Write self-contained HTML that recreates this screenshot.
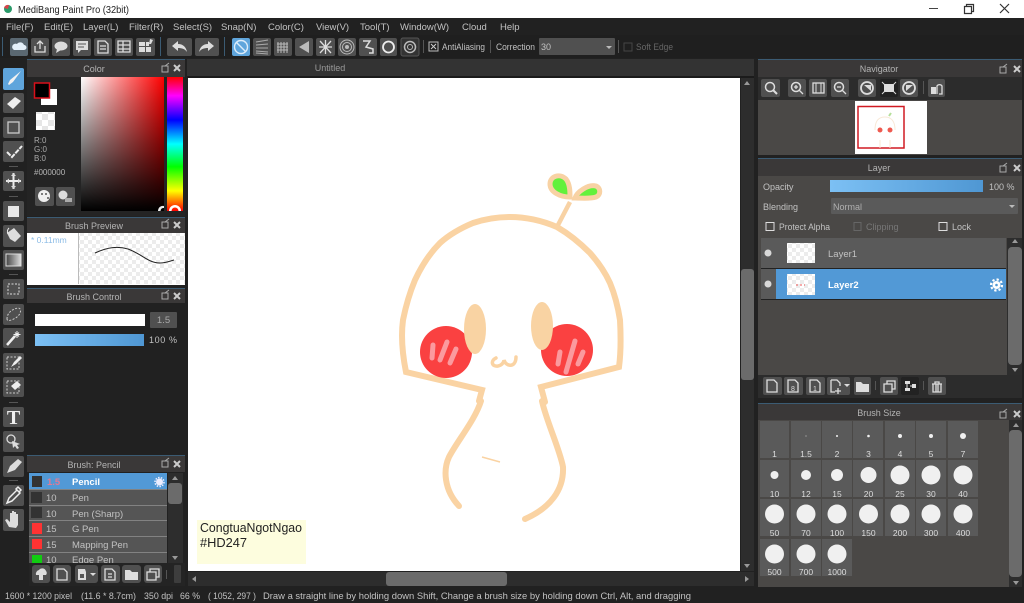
<!DOCTYPE html>
<html><head><meta charset="utf-8"><title>MediBang Paint Pro</title>
<style>
html,body{margin:0;padding:0;background:#222;width:1024px;height:603px;overflow:hidden}
svg{display:block}
text{font-family:"Liberation Sans",sans-serif;fill:#c2c2c2;font-size:9.5px}
.h{fill:#b4b4b4;font-size:9px;text-anchor:middle}
.b{fill:#505050}
.i{fill:none;stroke:#ddd;stroke-width:1.3}
.f{fill:#ddd}
.l{font-size:8.5px;fill:#ddd;text-anchor:middle}
.c{fill:#5a5a5a}
.d{fill:#f0f0f0}
.s{fill:none;stroke:#fad3a3;stroke-width:6;stroke-linecap:round;stroke-linejoin:miter}
.w{fill:none;stroke:#fb9a9e;stroke-width:5;stroke-linecap:round}
.x{stroke:#ccc;stroke-width:2;fill:none}
</style></head><body>
<svg width="1024" height="603" viewBox="0 0 1024 603" xmlns="http://www.w3.org/2000/svg">
<defs>
<pattern id="ck" width="12" height="12" patternUnits="userSpaceOnUse"><rect width="12" height="12" fill="#fff"/><rect width="6" height="6" fill="#e6e6e6"/><rect x="6" y="6" width="6" height="6" fill="#e6e6e6"/></pattern>
<pattern id="ck2" width="8" height="8" patternUnits="userSpaceOnUse"><rect width="8" height="8" fill="#fff"/><rect width="4" height="4" fill="#ececec"/><rect x="4" y="4" width="4" height="4" fill="#ececec"/></pattern>
<linearGradient id="gx"><stop offset="0" stop-color="#fff"/><stop offset="1" stop-color="#f00"/></linearGradient>
<linearGradient id="gy" x2="0" y2="1"><stop offset="0" stop-color="#000" stop-opacity="0"/><stop offset="1" stop-color="#000"/></linearGradient>
<linearGradient id="hue" x2="0" y2="1"><stop offset="0" stop-color="#f00"/><stop offset=".14" stop-color="#f0f"/><stop offset=".32" stop-color="#00f"/><stop offset=".5" stop-color="#0ff"/><stop offset=".67" stop-color="#0f0"/><stop offset=".85" stop-color="#ff0"/><stop offset="1" stop-color="#f00"/></linearGradient>
<linearGradient id="bl"><stop offset="0" stop-color="#7cc0f4"/><stop offset="1" stop-color="#4f97d3"/></linearGradient>
<linearGradient id="gr"><stop offset="0" stop-color="#444"/><stop offset="1" stop-color="#ddd"/></linearGradient>
</defs>

<!-- base -->
<rect width="1024" height="603" fill="#212121"/>
<rect width="1024" height="18" fill="#fff"/>
<circle cx="8" cy="9" r="4" fill="#2a9a6a"/><path d="M4 8a4 4 0 0 1 5-3l-1 4z" fill="#d8434a"/>
<text x="18" y="13" style="fill:#222;font-size:10px" textLength="111" lengthAdjust="spacingAndGlyphs">MediBang Paint Pro (32bit)</text>
<path d="M929 8.500h9" stroke="#444" stroke-width="1"/>
<path d="M964.500 6.500h7v7h-7zM966.500 6.500v-2h7v7h-2" fill="none" stroke="#333" stroke-width="1.200"/>
<path d="M1000 4l9 9M1009 4l-9 9" stroke="#333" stroke-width="1.200"/>

<!-- menu -->
<text x="6" y="30">File(F)</text><text x="44" y="30">Edit(E)</text><text x="83" y="30">Layer(L)</text><text x="129" y="30">Filter(R)</text><text x="173" y="30">Select(S)</text><text x="221" y="30">Snap(N)</text><text x="268" y="30">Color(C)</text><text x="316" y="30">View(V)</text><text x="360" y="30">Tool(T)</text><text x="400" y="30">Window(W)</text><text x="462" y="30">Cloud</text><text x="500" y="30">Help</text>

<!-- toolbar -->
<rect y="35" width="1024" height="23" fill="#1f1f1f"/>
<rect x="2" y="37" width="1" height="19" fill="#3b5b73"/><rect x="160" y="37" width="1" height="19" fill="#3b5b73"/><rect x="224" y="37" width="1" height="19" fill="#3b5b73"/>
<rect x="10" y="38" width="18" height="18" rx="2" fill="#5a6872"/><path d="M14 50h10a2.500 2.500 0 0 0 0-5 4 4 0 0 0-7-1 3 3 0 0 0-3 6z" fill="#e4f0fa"/>
<rect class="b" x="31" y="38" width="18" height="18" rx="2"/><path class="i" d="M35 46v6h10v-6M40 49v-8M37 44l3-3 3 3"/>
<rect class="b" x="52" y="38" width="18" height="18" rx="2"/><ellipse class="f" cx="61" cy="46" rx="6.500" ry="4.500"/><path class="f" d="M57 49l-1 4 5-3z"/>
<rect class="b" x="73" y="38" width="18" height="18" rx="2"/><path class="f" d="M76 41h12v9h-7l-3 3v-3h-2z"/><path d="M78 44h8M78 47h6" stroke="#555"/>
<rect class="b" x="94" y="38" width="18" height="18" rx="2"/><path class="i" d="M98 41h7l3 3v9H98zM100 46h6M100 49h6"/>
<rect class="b" x="115" y="38" width="18" height="18" rx="2"/><path class="i" d="M118 41h12v11h-12zM118 45h12M118 49h12M123 41v11"/>
<rect class="b" x="136" y="38" width="19" height="18" rx="2"/><path class="f" d="M139 42h6v4h-6zM146 42h3v4h-3zM139 47h6v5h-6zM146 47h5v5h-5zM150 39l3 1-2 4h-2z"/>
<rect class="b" x="167" y="38" width="25" height="18" rx="2"/><path class="f" d="M172 46l6-5v3c5 0 8 3 9 8-2-3-5-4-9-4v3z"/>
<rect class="b" x="195" y="38" width="24" height="18" rx="2"/><path class="f" d="M214 46l-6-5v3c-5 0-8 3-9 8 2-3 5-4 9-4v3z"/>
<rect x="232" y="38" width="18" height="18" rx="2" fill="#5fa5dc"/><circle cx="241" cy="47" r="6.500" fill="none" stroke="#dcecfa" stroke-width="1.400"/><path d="M236.500 42.500l9 9" stroke="#dcecfa" stroke-width="1.400"/>
<rect class="b" x="253" y="38" width="18" height="18" rx="2"/><path d="M256 42l12-2M256 45l12-1M256 48l12 0M256 51l12 1M256 53l12 1" stroke="#aaa"/>
<rect class="b" x="274" y="38" width="18" height="18" rx="2"/><path d="M278 42v11M281 42v11M284 42v11M287 42v11M277 44h11M277 47h11M277 50h11" stroke="#bbb"/>
<rect class="b" x="295" y="38" width="18" height="18" rx="2"/><path d="M299 47l10-6v12z" fill="#bbb"/>
<rect class="b" x="316" y="38" width="19" height="18" rx="2"/><path d="M325.500 40v14M319 47h13M320 41l11 12M331 41l-11 12" stroke="#ddd" stroke-width="1.300"/>
<rect class="b" x="338" y="38" width="18" height="18" rx="2"/><circle cx="347" cy="47" r="2" fill="#bbb"/><circle cx="347" cy="47" r="4.500" fill="none" stroke="#bbb"/><circle cx="347" cy="47" r="7" fill="none" stroke="#bbb"/>
<rect class="b" x="359" y="38" width="18" height="18" rx="2"/><path d="M363 41h7l-4 6 7 2v4h-4" fill="none" stroke="#ddd" stroke-width="1.500"/>
<rect class="b" x="380" y="38" width="17" height="18" rx="2"/><circle cx="388.500" cy="47" r="5.500" fill="none" stroke="#eee" stroke-width="1.800"/>
<rect x="401" y="38" width="18" height="18" rx="2" fill="#333" stroke="#555"/><circle cx="410" cy="47" r="5.500" fill="none" stroke="#bbb" stroke-width="1.500"/><circle cx="410" cy="47" r="2.500" fill="none" stroke="#bbb"/>
<rect x="423" y="40" width="1" height="13" fill="#555"/>
<rect x="429" y="42" width="9" height="9" fill="none" stroke="#bbb"/><path d="M431 44l5 5M436 44l-5 5" stroke="#ccc"/>
<text x="442" y="50" style="font-size:9px" textLength="43" lengthAdjust="spacingAndGlyphs">AntiAliasing</text>
<rect x="490" y="40" width="1" height="13" fill="#555"/>
<text x="496" y="50" style="font-size:9px" textLength="39" lengthAdjust="spacingAndGlyphs">Correction</text>
<rect class="b" x="539" y="38" width="76" height="17" rx="1"/><text x="541" y="50" style="font-size:9px">30</text><path d="M606 46h6l-3 3z" fill="#bbb"/>
<rect x="618" y="40" width="1" height="13" fill="#555"/>
<rect x="624" y="43" width="8" height="8" fill="none" stroke="#444"/>
<text x="636" y="50" style="font-size:9px;fill:#666" textLength="37" lengthAdjust="spacingAndGlyphs">Soft Edge</text>

<!-- left tools -->
<rect x="3" y="68" width="21" height="22" rx="2" fill="#5fa5dc"/><path d="M8 84l2-4 11-9-8 11-4 3z" fill="#f2f2f2"/>
<rect class="b" x="3" y="93" width="21" height="20" rx="2"/><path d="M7 104l8-7 6 4-8 8z" fill="#eee"/>
<rect class="b" x="3" y="117" width="21" height="21" rx="2"/><rect x="8" y="122" width="11" height="11" fill="none" stroke="#ccc" stroke-width="1.300"/>
<rect class="b" x="3" y="141" width="21" height="21" rx="2"/><path d="M7 152l5 5 10-11" fill="none" stroke="#eee" stroke-width="2" stroke-dasharray="5 1"/>
<rect x="9" y="166" width="9" height="1" fill="#555"/>
<rect class="b" x="3" y="171" width="21" height="20" rx="2"/><path d="M13.500 173v16M6 181h15" stroke="#eee" stroke-width="2"/><path class="f" d="M11 176l2.500-3 2.500 3zM11 186l2.500 3 2.500-3zM9 178.500l-3 2.500 3 2.500zM18 178.500l3 2.500-3 2.500z"/>
<rect x="9" y="196" width="9" height="1" fill="#555"/>
<rect class="b" x="3" y="201" width="21" height="20" rx="2"/><rect x="8" y="206" width="11" height="11" fill="#e8e8e8"/>
<rect class="b" x="3" y="225" width="21" height="22" rx="2"/><path class="f" d="M7 233l7-5 7 8-6 6-5-3z"/><path d="M9 228c-2 2-2 4-1 6" stroke="#eee" fill="none"/>
<rect class="b" x="3" y="250" width="21" height="20" rx="2"/><rect x="6" y="254" width="15" height="12" fill="url(#gr)" stroke="#ddd"/>
<rect x="9" y="274" width="9" height="1" fill="#555"/>
<rect class="b" x="3" y="279" width="21" height="20" rx="2"/><rect x="8" y="284" width="11" height="10" fill="none" stroke="#ddd" stroke-dasharray="2 1.500"/>
<rect class="b" x="3" y="304" width="21" height="21" rx="2"/><path d="M7 319c0-6 5-10 11-11 4 0 3 6-1 9s-10 5-10 2z" fill="none" stroke="#ccc" stroke-dasharray="2 1.500"/>
<rect class="b" x="3" y="328" width="21" height="20" rx="2"/><path d="M7 345l8-9" stroke="#eee" stroke-width="2.500"/><path d="M17 331v7M13.500 334.500h7M15 332.500l4 4M19 332.500l-4 4" stroke="#eee"/>
<rect class="b" x="3" y="353" width="21" height="20" rx="2"/><rect x="7" y="357" width="12" height="12" fill="none" stroke="#ccc" stroke-dasharray="2 1.500"/><path d="M11 367l3-5 6-6 2 2-6 6z" fill="#eee"/>
<rect class="b" x="3" y="377" width="21" height="20" rx="2"/><rect x="7" y="381" width="12" height="12" fill="none" stroke="#ccc" stroke-dasharray="2 1.500"/><path d="M11 386l6-5 4 4-6 5z" fill="#eee"/>
<rect x="9" y="402" width="9" height="1" fill="#555"/>
<rect class="b" x="3" y="407" width="21" height="20" rx="2"/><text x="13.500" y="424" text-anchor="middle" style="font-family:'Liberation Serif',serif;font-weight:bold;font-size:20px;fill:#eee">T</text>
<rect class="b" x="3" y="431" width="21" height="21" rx="2"/><circle cx="11" cy="439" r="4" fill="none" stroke="#ddd" stroke-width="1.300"/><path class="f" d="M12 441l8 3-3 1 2 3-2 1-2-3-2 2z"/>
<rect class="b" x="3" y="456" width="21" height="21" rx="2"/><path class="f" d="M7 473l3-7 8-7 4 3-7 8z"/>
<rect x="9" y="480" width="9" height="1" fill="#555"/>
<rect class="b" x="3" y="485" width="21" height="21" rx="2"/><path d="M7 503l2-5 8-8 3 3-8 8zM16 489l2-2 3 3-2 2z" fill="none" stroke="#eee" stroke-width="1.500"/>
<rect class="b" x="3" y="509" width="21" height="22" rx="2"/><path class="f" d="M9 527l-4-7 2-1 3 3v-9h2v7-9h2v9-8h2v8-6h2v11l-2 3z"/>

<!-- color panel -->
<rect x="27" y="60" width="158" height="156" fill="#242424"/>
<rect x="27" y="60" width="158" height="17" fill="#3a3838"/><rect x="27" y="59" width="158" height="1" fill="#3b5b73"/>
<text class="h" x="94" y="72">Color</text>
<path d="M162 66h6v6h-6zM165 66l4-3" fill="none" stroke="#aaa"/><path class="x" d="M174 65l6 6M180 65l-6 6"/>
<rect x="41" y="89" width="16" height="16" fill="#fff"/>
<rect x="34.500" y="83" width="15" height="15" fill="#000" stroke="#d8101a" stroke-width="1.500"/>
<rect x="36" y="112" width="19" height="18" fill="url(#ck)"/>
<text x="34" y="143" style="font-size:8px;fill:#a8a8a8">R:0</text><text x="34" y="152" style="font-size:8px;fill:#a8a8a8">G:0</text><text x="34" y="161" style="font-size:8px;fill:#a8a8a8">B:0</text>
<text x="34" y="175" style="font-size:8px;fill:#b4b4b4">#000000</text>
<rect class="b" x="35" y="187" width="19" height="19" rx="2"/><circle cx="44" cy="196" r="6" fill="#eee"/><circle cx="42" cy="194" r="1" fill="#555"/><circle cx="46" cy="194" r="1" fill="#555"/><circle cx="48" cy="198" r="1" fill="#555"/>
<rect class="b" x="56" y="187" width="19" height="19" rx="2"/><circle cx="63" cy="195" r="4.500" fill="#ddd"/><rect x="65" y="198" width="7" height="4" fill="#aaa"/>
<rect x="81" y="77" width="83" height="134" fill="url(#gx)"/><rect x="81" y="77" width="83" height="134" fill="url(#gy)"/>
<rect x="167" y="77" width="16" height="134" fill="url(#hue)"/>
<path d="M158 211a5 5 0 0 1 6-5v2a3 3 0 0 0-3.500 3z" fill="#eee"/>
<path d="M169 211a6 6 0 0 1 12 0h-2.500a3.500 3.500 0 0 0-7 0z" fill="#fff"/>

<!-- brush preview -->
<rect x="27" y="217" width="158" height="1" fill="#3b5b73"/><rect x="27" y="218" width="158" height="15" fill="#3a3838"/>
<text class="h" x="94" y="229">Brush Preview</text>
<path d="M162 222h6v6h-6zM165 222l4-3" fill="none" stroke="#aaa"/><path class="x" d="M174 222l6 6M180 222l-6 6"/>
<rect x="27" y="233" width="158" height="52" fill="#fff"/><rect x="79" y="233" width="106" height="51" fill="url(#ck2)"/><rect x="78" y="233" width="1" height="51" fill="#bbb"/>
<text x="31" y="243" style="font-size:8.5px;fill:#8cbce6">* 0.11mm</text>
<path d="M95 253C108 247 118 246 128 249C142 254 148 263 160 263C166 263 170 261 174 260" fill="none" stroke="#222" stroke-width="1"/>

<!-- brush control -->
<rect x="27" y="288" width="158" height="1" fill="#3b5b73"/><rect x="27" y="289" width="158" height="14" fill="#3a3838"/>
<text class="h" x="94" y="300">Brush Control</text>
<path d="M162 293h6v6h-6zM165 293l4-3" fill="none" stroke="#aaa"/><path class="x" d="M174 293l6 6M180 293l-6 6"/>
<rect x="35" y="314" width="110" height="12" fill="#fff"/>
<rect x="150" y="312" width="27" height="16" rx="1" fill="#505050"/><text x="163.500" y="323" text-anchor="middle" style="fill:#aaa">1.5</text>
<rect x="35" y="334" width="109" height="12" fill="url(#bl)"/><text x="149" y="343" style="font-size:9px" textLength="28">100 %</text>

<!-- brush list -->
<rect x="27" y="455" width="158" height="1" fill="#3b5b73"/><rect x="27" y="456" width="158" height="16" fill="#3a3838"/>
<text class="h" x="94" y="468">Brush: Pencil</text>
<path d="M162 461h6v6h-6zM165 461l4-3" fill="none" stroke="#aaa"/><path class="x" d="M174 461l6 6M180 461l-6 6"/>
<rect x="29" y="473" width="138" height="90" fill="#555"/>
<rect x="29" y="473" width="138" height="16" fill="#5299d6"/>
<path d="M29 505.500h138M29 520.500h138M29 536.500h138M29 552.500h138M29 489.500h138" stroke="#828282"/>
<rect x="32" y="476" width="10" height="11" fill="#333"/><rect x="31" y="492" width="11" height="11" fill="#333"/><rect x="31" y="507" width="11" height="11" fill="#333"/><rect x="32" y="523" width="10" height="11" fill="#f33"/><rect x="32" y="539" width="10" height="10" fill="#f33"/><rect x="32" y="555" width="10" height="8" fill="#1c1"/>
<text x="47" y="485" style="font-weight:bold;fill:#e07a94">1.5</text><text x="72" y="485" style="font-weight:bold;fill:#fff">Pencil</text>
<circle cx="159.500" cy="482" r="3.500" fill="#eef"/><circle cx="159.500" cy="482" r="4.500" fill="none" stroke="#eef" stroke-dasharray="1.500 1.300" stroke-width="1.500"/>
<text x="46" y="501">10</text><text x="72" y="501">Pen</text>
<text x="46" y="517">10</text><text x="72" y="517">Pen (Sharp)</text>
<text x="46" y="532">15</text><text x="72" y="532">G Pen</text>
<text x="46" y="548">15</text><text x="72" y="548">Mapping Pen</text>
<text x="46" y="563">10</text><text x="72" y="563">Edge Pen</text>
<rect x="29" y="563" width="156" height="23" fill="#242424"/>
<rect x="168" y="473" width="15" height="90" fill="#2d2d2d"/><rect x="168" y="483" width="14" height="21" rx="3" fill="#6b6b6b"/><path d="M172 480l3-4 3 4zM172 556l3 4 3-4z" fill="#999"/>
<rect class="b" x="32" y="565" width="18" height="18" rx="3"/><path class="f" d="M36 575a4 4 0 0 1 3-5 4 4 0 0 1 7 1 3 3 0 0 1 0 4h-3v5h-4v-5z"/>
<rect class="b" x="53" y="565" width="18" height="18" rx="3"/><path class="i" d="M57 569h7l3 3v8H57z"/>
<rect class="b" x="75" y="565" width="23" height="18" rx="3"/><path class="f" d="M78 569h7l1 3v8h-8z"/><rect x="80" y="574" width="4" height="4" fill="#555"/><path d="M90 573h6l-3 3z" fill="#ddd"/>
<rect class="b" x="101" y="565" width="19" height="18" rx="3"/><path class="i" d="M105 569h7l3 3v8h-10zM108 574h4M108 577h4"/>
<rect class="b" x="122" y="565" width="19" height="18" rx="3"/><path class="f" d="M125 570h5l2 2h6v8h-13z"/>
<rect class="b" x="144" y="565" width="18" height="18" rx="3"/><path class="i" d="M147 572h9v8h-9zM150 572v-3h9v8h-3"/>
<rect x="166" y="570" width="1" height="9" fill="#555"/>
<rect x="174" y="565" width="7" height="18" rx="1" fill="#3d3d3d"/>

<!-- canvas -->
<rect x="187" y="59" width="567" height="17" fill="#333"/>
<rect x="187" y="76" width="567" height="2" fill="#1b1b1b"/>
<text class="h" x="330" y="71" style="fill:#999">Untitled</text>
<rect x="188" y="78" width="552" height="493" fill="#fff"/>

<!-- drawing -->
<path class="s" d="M479 401L482 390L406 372C402 352 401 335 403 320C406 305 410 292 415 280C422 265 430 253 440 243C450 234 461 228 473 223C485 219 497 217 510 217C527 217 543 221 557 227C569 234 580 243 590 253C598 262 605 272 610 283C615 295 618 307 620 320C621 338 621 352 619 367L541 387L545 402"/>
<path class="s" d="M481 401C475 420 458 440 449 457C443 470 444 490 459 506"/>
<path class="s" d="M542 401C546 420 560 450 563 467C564 490 550 508 525 519"/>
<path d="M482 457L500 462" stroke="#fad3a3" stroke-width="1.500"/>
<path d="M558 225L570 202" stroke="#f8d2a4" stroke-width="4.500"/>
<path d="M570 197C560 197 550 192 550 184C550 176 560 173 566 179C570 184 570 192 570 197Z" fill="#62f13c" stroke="#f8d2a4" stroke-width="5"/>
<path d="M575 198C577 192 588 184 596 186C601 188 601 195 596 197C590 199 582 198 575 198Z" fill="#62f13c" stroke="#f8d2a4" stroke-width="5"/>
<circle cx="446" cy="352" r="26" fill="#fa4141"/><circle cx="567" cy="350" r="26" fill="#fa4141"/>
<path class="w" d="M432 358L433 345M440 360L447 342M450 363L456 349"/>
<path class="w" d="M558 364L560 352M566 372L575 341M578 364L583 352"/>
<ellipse cx="475" cy="329" rx="11" ry="25" fill="#f9d3a3"/><ellipse cx="542" cy="326" rx="11" ry="24" fill="#f9d3a3"/>
<path d="M496 358C490 361 492 367 498 366C503 365 504 361 504 360C506 367 516 368 516 357" fill="none" stroke="#fad3a3" stroke-width="3.500" stroke-linecap="round"/>

<!-- watermark -->
<rect x="197" y="520" width="109" height="44" fill="#fdfdde"/>
<text x="200" y="532" style="fill:#222;font-size:13px" textLength="102" lengthAdjust="spacingAndGlyphs">CongtuaNgotNgao</text>
<text x="200" y="547" style="fill:#222;font-size:13px" textLength="47" lengthAdjust="spacingAndGlyphs">#HD247</text>

<!-- scrollbars -->
<rect x="741" y="78" width="13" height="493" fill="#2d2d2d"/><rect x="741" y="269" width="13" height="111" rx="3" fill="#6b6b6b"/><path d="M744 85l3-4 3 4zM744 564l3 4 3-4z" fill="#999"/>
<rect x="188" y="572" width="566" height="14" fill="#2d2d2d"/><rect x="386" y="572" width="121" height="14" rx="3" fill="#6b6b6b"/><path d="M196 576l-4 3 4 3zM745 576l4 3-4 3z" fill="#999"/>

<!-- status -->
<text x="5" y="599" textLength="67" lengthAdjust="spacingAndGlyphs">1600 * 1200 pixel</text><text x="81" y="599" textLength="55" lengthAdjust="spacingAndGlyphs">(11.6 * 8.7cm)</text><text x="144" y="599" textLength="29" lengthAdjust="spacingAndGlyphs">350 dpi</text><text x="180" y="599" textLength="20" lengthAdjust="spacingAndGlyphs">66 %</text><text x="208" y="599" textLength="48" lengthAdjust="spacingAndGlyphs">( 1052, 297 )</text><text x="263" y="599" textLength="428" lengthAdjust="spacingAndGlyphs">Draw a straight line by holding down Shift, Change a brush size by holding down Ctrl, Alt, and dragging</text>

<!-- navigator -->
<rect x="758" y="60" width="264" height="95" fill="#3a3838"/><rect x="758" y="59" width="264" height="1" fill="#3b5b73"/>
<text class="h" x="879" y="72">Navigator</text>
<path d="M1000 67h6v6h-6zM1003 67l4-3" fill="none" stroke="#aaa"/><path class="x" d="M1014 66l6 6M1020 66l-6 6"/>
<rect x="758" y="77" width="264" height="23" fill="#2c2c2c"/>
<rect class="b" x="761" y="79" width="19" height="18" rx="2"/><circle cx="770" cy="87" r="4.500" fill="none" stroke="#ddd" stroke-width="1.500"/><path d="M773 90l4 4" stroke="#ddd" stroke-width="2"/>
<rect class="b" x="788" y="79" width="18" height="18" rx="2"/><circle cx="796" cy="87" r="4.500" fill="none" stroke="#ddd" stroke-width="1.500"/><path d="M799 90l4 4M794 87h4M796 85v4" stroke="#ddd" stroke-width="1.300"/>
<rect class="b" x="809" y="79" width="18" height="18" rx="2"/><rect x="813" y="83" width="11" height="10" fill="none" stroke="#ddd" stroke-width="1.300"/><path d="M816 83v10M821 83v10" stroke="#ddd"/>
<rect class="b" x="831" y="79" width="18" height="18" rx="2"/><circle cx="839" cy="87" r="4.500" fill="none" stroke="#ddd" stroke-width="1.500"/><path d="M842 90l4 4M837 87h4" stroke="#ddd" stroke-width="1.300"/>
<rect class="b" x="858" y="79" width="18" height="18" rx="2"/><circle cx="867" cy="88" r="6" fill="none" stroke="#ddd" stroke-width="1.800"/><path class="f" d="M864 85l7 0 0 6z"/>
<rect x="880" y="79" width="18" height="18" rx="2" fill="#222"/><path class="f" d="M884 84h10v8h-10z"/><path d="M882 82l3 3M896 82l-3 3M882 94l3-3M896 94l-3-3" stroke="#ddd"/>
<rect class="b" x="900" y="79" width="18" height="18" rx="2"/><circle cx="909" cy="88" r="6" fill="none" stroke="#ddd" stroke-width="1.800"/><path class="f" d="M906 85l7 0-7 6z"/>
<rect x="923" y="81" width="1" height="13" fill="#555"/>
<rect class="b" x="928" y="79" width="17" height="18" rx="2"/><rect x="931" y="87" width="5" height="7" fill="#ddd"/><path d="M937 94v-8a3 3 0 0 1 5 0v8h-3" fill="none" stroke="#ddd" stroke-width="1.300"/>
<rect x="758" y="100" width="264" height="55" fill="#4a4846"/>
<rect x="855" y="101" width="72" height="53" fill="#fff"/>
<rect x="858" y="106.500" width="46" height="41.500" fill="none" stroke="#d01a22" stroke-width="1.500"/>
<circle cx="880" cy="130" r="2.500" fill="#ee5a50"/><circle cx="890" cy="130" r="2.500" fill="#ee5a50"/>
<path d="M875 130c0-10 4-13 10-13s10 4 10 13M880 140v8M890 140v8" fill="none" stroke="#f8e8d6"/><path d="M889 116l2-3" stroke="#b5df9a" stroke-width="2"/>

<!-- layer -->
<rect x="758" y="158" width="264" height="1" fill="#3b5b73"/><rect x="758" y="159" width="264" height="17" fill="#3a3838"/>
<text class="h" x="879" y="171">Layer</text>
<path d="M1000 166h6v6h-6zM1003 166l4-3" fill="none" stroke="#aaa"/><path class="x" d="M1014 165l6 6M1020 165l-6 6"/>
<rect x="758" y="176" width="264" height="222" fill="#4a4846"/>
<text x="763" y="190" style="font-size:9px">Opacity</text>
<rect x="830" y="180" width="153" height="12" fill="url(#bl)"/><text x="989" y="190" style="font-size:9px">100 %</text>
<text x="763" y="210" style="font-size:9px">Blending</text>
<rect x="831" y="198" width="187" height="16" rx="1" fill="#5a5a5a"/><text x="833" y="210" style="font-size:9px;fill:#b0b0b0">Normal</text><path d="M1009 205h6l-3 3z" fill="#bbb"/>
<rect x="766" y="222.500" width="8" height="8" fill="none" stroke="#ddd"/><text x="779" y="230" style="font-size:9px" textLength="51" lengthAdjust="spacingAndGlyphs">Protect Alpha</text>
<rect x="854" y="222.500" width="7" height="8" fill="none" stroke="#666"/><text x="866" y="230" style="font-size:9px;fill:#777">Clipping</text>
<rect x="939" y="222.500" width="8" height="8" fill="none" stroke="#ddd"/><text x="952" y="230" style="font-size:9px">Lock</text>
<rect x="761" y="238" width="245" height="137" fill="#4a4846"/>
<rect x="761" y="238" width="245" height="30" fill="#5a5a5a"/>
<rect x="761" y="269" width="15" height="30" fill="#5a5a5a"/><rect x="776" y="269" width="230" height="30" fill="#5299d6"/>
<path d="M761 268.500h245M761 299.500h245" stroke="#222"/>
<circle cx="768" cy="253" r="3.500" fill="#d8d8d8"/><circle cx="768" cy="284" r="3.500" fill="#d8d8d8"/>
<rect x="787" y="243" width="28" height="20" fill="url(#ck2)"/><rect x="787" y="274" width="28" height="21" fill="url(#ck2)"/>
<path d="M796 285h2M800 285h2M804 285h1" stroke="#e55" stroke-width="1"/>
<text x="828" y="257" style="font-size:9.500px">Layer1</text><text x="828" y="288" style="font-size:9.500px;font-weight:bold;fill:#fff">Layer2</text>
<circle cx="996.500" cy="285" r="4" fill="#fff"/><circle cx="996.500" cy="285" r="5.500" fill="none" stroke="#fff" stroke-width="2.200" stroke-dasharray="2.200 2.100"/><circle cx="996.500" cy="285" r="1.300" fill="#5299d6"/>
<rect x="1007" y="238" width="15" height="137" fill="#2d2d2d"/><rect x="1008" y="247" width="14" height="118" rx="4" fill="#6b6b6b"/><path d="M1012 243l3-4 3 4zM1012 368l3 4 3-4z" fill="#999"/>
<rect x="758" y="375" width="264" height="23" fill="#2c2c2c"/>
<rect class="b" x="763" y="377" width="19" height="18" rx="2"/><path class="i" d="M767 380h7l3 3v9h-10z"/>
<rect class="b" x="784" y="377" width="19" height="18" rx="2"/><path class="i" d="M788 380h7l3 3v9h-10z"/><text x="793" y="391" text-anchor="middle" style="font-size:7px;fill:#ddd">8</text>
<rect class="b" x="806" y="377" width="19" height="18" rx="2"/><path class="i" d="M810 380h7l3 3v9h-10z"/><text x="815" y="391" text-anchor="middle" style="font-size:7px;fill:#ddd">1</text>
<rect class="b" x="827" y="377" width="23" height="18" rx="2"/><path class="i" d="M831 380h6l3 3v3M831 380v12h4M838 388v6M835 391h6"/><path d="M844 384h6l-3 3z" fill="#ddd"/>
<rect class="b" x="854" y="377" width="17" height="18" rx="2"/><path class="f" d="M856 382h5l2 2h6v8h-13z"/>
<rect x="875" y="381" width="1" height="9" fill="#555"/>
<rect class="b" x="880" y="377" width="18" height="18" rx="2"/><path class="i" d="M884 384h8v8h-8zM887 384v-3h8v8h-3"/>
<rect x="901" y="377" width="18" height="18" rx="2" fill="#222"/><path class="f" d="M905 381h5v3h-5zM905 388h5v3h-5zM912 384h4v4h-4z"/><path d="M907 384v4M910 386h2" stroke="#ddd"/>
<rect x="923" y="381" width="1" height="9" fill="#555"/>
<rect class="b" x="928" y="377" width="18" height="18" rx="2"/><path class="i" d="M932 384h10M933 384v8h8v-8M936 384v8M938 384v8M935 384v-2h4v2"/>

<!-- brush size -->
<rect x="758" y="403" width="264" height="1" fill="#3b5b73"/><rect x="758" y="404" width="264" height="16" fill="#3a3838"/>
<text class="h" x="879" y="416">Brush Size</text>
<path d="M1000 412h6v6h-6zM1003 412l4-3" fill="none" stroke="#aaa"/><path class="x" d="M1014 411l6 6M1020 411l-6 6"/>
<rect x="758" y="420" width="264" height="167" fill="#4a4846"/>
<rect class="c" x="760" y="421" width="29" height="37"/><rect class="c" x="791" y="421" width="30" height="37"/><rect class="c" x="822" y="421" width="30" height="37"/><rect class="c" x="853" y="421" width="30" height="37"/><rect class="c" x="885" y="421" width="30" height="37"/><rect class="c" x="916" y="421" width="30" height="37"/><rect class="c" x="948" y="421" width="30" height="37"/>
<rect class="c" x="760" y="460" width="29" height="37"/><rect class="c" x="791" y="460" width="30" height="37"/><rect class="c" x="822" y="460" width="30" height="37"/><rect class="c" x="853" y="460" width="30" height="37"/><rect class="c" x="885" y="460" width="30" height="37"/><rect class="c" x="916" y="460" width="30" height="37"/><rect class="c" x="948" y="460" width="30" height="37"/>
<rect class="c" x="760" y="499" width="29" height="37"/><rect class="c" x="791" y="499" width="30" height="37"/><rect class="c" x="822" y="499" width="30" height="37"/><rect class="c" x="853" y="499" width="30" height="37"/><rect class="c" x="885" y="499" width="30" height="37"/><rect class="c" x="916" y="499" width="30" height="37"/><rect class="c" x="948" y="499" width="30" height="37"/>
<rect class="c" x="760" y="539" width="29" height="37"/><rect class="c" x="791" y="539" width="30" height="37"/><rect class="c" x="822" y="539" width="30" height="37"/>
<circle class="d" cx="806" cy="436" r=".5"/><circle class="d" cx="837" cy="436" r="1"/><circle class="d" cx="868.500" cy="436" r="1.300"/><circle class="d" cx="900" cy="436" r="2"/><circle class="d" cx="931" cy="436" r="2"/><circle class="d" cx="963" cy="436" r="3"/>
<circle class="d" cx="774.500" cy="475" r="4"/><circle class="d" cx="806" cy="475" r="5"/><circle class="d" cx="837" cy="475" r="6"/><circle class="d" cx="868.500" cy="475" r="8"/><circle class="d" cx="900" cy="475" r="9.500"/><circle class="d" cx="931" cy="475" r="9.500"/><circle class="d" cx="963" cy="475" r="9.500"/>
<circle class="d" cx="774.500" cy="514" r="9.500"/><circle class="d" cx="806" cy="514" r="9.500"/><circle class="d" cx="837" cy="514" r="9.500"/><circle class="d" cx="868.500" cy="514" r="9.500"/><circle class="d" cx="900" cy="514" r="9.500"/><circle class="d" cx="931" cy="514" r="9.500"/><circle class="d" cx="963" cy="514" r="9.500"/>
<circle class="d" cx="774.500" cy="554" r="9.500"/><circle class="d" cx="806" cy="554" r="9.500"/><circle class="d" cx="837" cy="554" r="9.500"/>
<text class="l" x="774.500" y="457">1</text><text class="l" x="806" y="457">1.5</text><text class="l" x="837" y="457">2</text><text class="l" x="868.500" y="457">3</text><text class="l" x="900" y="457">4</text><text class="l" x="931" y="457">5</text><text class="l" x="963" y="457">7</text>
<text class="l" x="774.500" y="497">10</text><text class="l" x="806" y="497">12</text><text class="l" x="837" y="497">15</text><text class="l" x="868.500" y="497">20</text><text class="l" x="900" y="497">25</text><text class="l" x="931" y="497">30</text><text class="l" x="963" y="497">40</text>
<text class="l" x="774.500" y="536">50</text><text class="l" x="806" y="536">70</text><text class="l" x="837" y="536">100</text><text class="l" x="868.500" y="536">150</text><text class="l" x="900" y="536">200</text><text class="l" x="931" y="536">300</text><text class="l" x="963" y="536">400</text>
<text class="l" x="774.500" y="575">500</text><text class="l" x="806" y="575">700</text><text class="l" x="837" y="575">1000</text>
<rect x="1009" y="420" width="13" height="167" fill="#2d2d2d"/><rect x="1009" y="430" width="13" height="147" rx="4" fill="#6b6b6b"/><path d="M1013 427l3-4 3 4zM1013 581l3 4 3-4z" fill="#999"/>
</svg>
</body></html>
